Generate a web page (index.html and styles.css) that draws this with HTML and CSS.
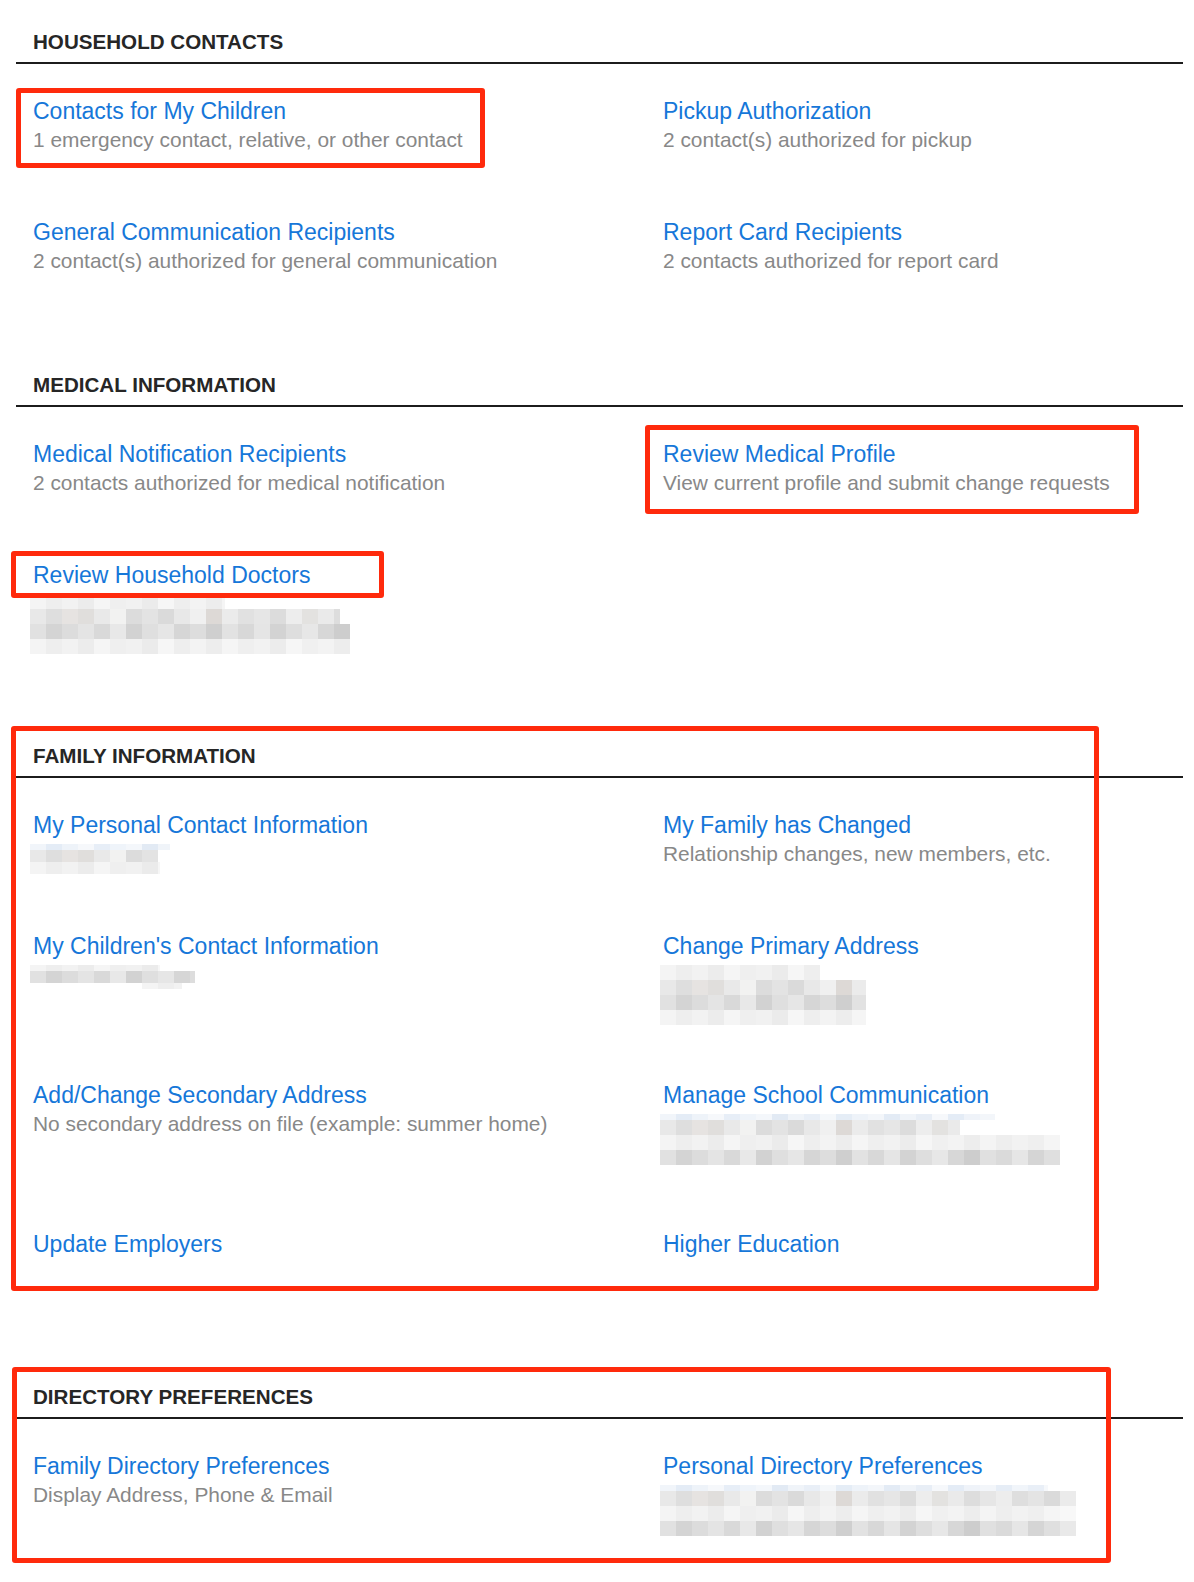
FILE: index.html
```html
<!DOCTYPE html>
<html lang="en">
<head>
  <meta charset="UTF-8">
  <meta name="viewport" content="width=device-width, initial-scale=1.0">
  <title>Family Profile</title>
  <link rel="stylesheet" href="styles.css">
</head>
<body>
  <div class="sheet">
    <section class="group">
      <h2 class="group-title">HOUSEHOLD CONTACTS</h2>
      <div class="links">
        <div class="item">
          <a href="#">Contacts for My Children</a>
          <p class="note">1 emergency contact, relative, or other contact</p>
        </div>
        <div class="item">
          <a href="#">Pickup Authorization</a>
          <p class="note">2 contact(s) authorized for pickup</p>
        </div>
        <div class="item">
          <a href="#">General Communication Recipients</a>
          <p class="note">2 contact(s) authorized for general communication</p>
        </div>
        <div class="item">
          <a href="#">Report Card Recipients</a>
          <p class="note">2 contacts authorized for report card</p>
        </div>
      </div>
    </section>

    <section class="group">
      <h2 class="group-title">MEDICAL INFORMATION</h2>
      <div class="links">
        <div class="item">
          <a href="#">Medical Notification Recipients</a>
          <p class="note">2 contacts authorized for medical notification</p>
        </div>
        <div class="item">
          <a href="#">Review Medical Profile</a>
          <p class="note">View current profile and submit change requests</p>
        </div>
        <div class="item">
          <a href="#">Review Household Doctors</a>
          <!-- doctor names hidden -->
          <div class="mosaic two doctors">
            <span class="px light w195"></span>
            <span class="px mid w310"></span>
            <span class="px dark w320"></span>
            <span class="px light w320"></span>
          </div>
        </div>
      </div>
    </section>

    <section class="group">
      <h2 class="group-title">FAMILY INFORMATION</h2>
      <div class="links">
        <div class="item">
          <a href="#">My Personal Contact Information</a>
          <div class="mosaic personal">
            <span class="px blue w140"></span>
            <span class="px mid w128 tall"></span>
            <span class="px light w130 tall"></span>
          </div>
        </div>
        <div class="item">
          <a href="#">My Family has Changed</a>
          <p class="note">Relationship changes, new members, etc.</p>
        </div>
        <div class="item">
          <a href="#">My Children's Contact Information</a>
          <div class="mosaic children">
            <span class="px light w130 thin"></span>
            <span class="px dark w165 tall"></span>
            <span class="px light w40 thin shift"></span>
          </div>
        </div>
        <div class="item">
          <a href="#">Change Primary Address</a>
          <div class="mosaic two address">
            <span class="px light w160"></span>
            <span class="px mid w206"></span>
            <span class="px dark w206"></span>
            <span class="px light w206"></span>
          </div>
        </div>
        <div class="item">
          <a href="#">Add/Change Secondary Address</a>
          <p class="note">No secondary address on file (example: summer home)</p>
        </div>
        <div class="item">
          <a href="#">Manage School Communication</a>
          <div class="mosaic two school">
            <span class="px blue w335 thin"></span>
            <span class="px mid w300"></span>
            <span class="px light w400"></span>
            <span class="px dark w400"></span>
          </div>
        </div>
        <div class="item">
          <a href="#">Update Employers</a>
          <p class="note"></p>
        </div>
        <div class="item">
          <a href="#">Higher Education</a>
          <p class="note"></p>
        </div>
      </div>
    </section>

    <section class="group">
      <h2 class="group-title">DIRECTORY PREFERENCES</h2>
      <div class="links">
        <div class="item">
          <a href="#">Family Directory Preferences</a>
          <p class="note">Display Address, Phone &amp; Email</p>
        </div>
        <div class="item">
          <a href="#">Personal Directory Preferences</a>
          <div class="mosaic two directory">
            <span class="px blue w388 thin"></span>
            <span class="px mid w416"></span>
            <span class="px light w416"></span>
            <span class="px dark w416"></span>
          </div>
        </div>
      </div>
    </section>

    <!-- review marks drawn over the page -->
    <div class="mark mark-children"></div>
    <div class="mark mark-medical"></div>
    <div class="mark mark-doctors"></div>
    <div class="mark mark-family"></div>
    <div class="mark mark-directory"></div>
  </div>
</body>
</html>
```

FILE: styles.css
```css
*{
  box-sizing: border-box;
}
body{
  margin: 0;
  background: #fff;
  font-family: "Liberation Sans", Arial, Helvetica, sans-serif;
}
a{
  text-decoration: none;
}
.sheet{
  position: relative;
  padding-top: 30px;
  padding-bottom: 20px;
}
.group{
  margin: 0 11px 0 16px;
}
.group + .group{
  margin-top: 34px;
}
.group-title{
  margin: 0;
  padding: 0 17px 8px;
  font-size: 20.6px;
  line-height: 24px;
  font-weight: bold;
  color: #262626;
  border-bottom: 2px solid #1c1c1c;
}
.links{
  display: grid;
  grid-template-columns: 630px 1fr;
  row-gap: 64px;
  padding: 33px 17px 64px;
}
.item > a{
  display: block;
  font-size: 23px;
  line-height: 29px;
  color: #1677d9;
}
.note{
  margin: 0;
  min-height: 28px;
  font-size: 20.9px;
  line-height: 28px;
  color: #888;
}

/* pixelated (hidden) details */
.mosaic{
  height: 28px;
  margin-left: -3px;
  padding-top: 4px;
  display: flex;
  flex-direction: column;
}
.mosaic.two{
  height: 56px;
}
.px{
  display: block;
  height: 15px;
  flex-shrink: 0;
}
.px.thin{
  height: 6px;
}
.px.tall{
  height: 12px;
}
.px.shift{
  margin-left: 112px;
}
.px.blue{
  height: 6px;
  background: linear-gradient(90deg, #f1f5fa 0 16px, #e4ecf6 16px 32px, #eef3f9 32px 48px, #f6f8fb 48px 64px, #e7eef7 64px 80px, #eff4fa 80px 96px, #f4f7fb 96px 112px, #e2eaf4 112px 128px, #f0f4f9 128px 144px, #e9eff7 144px 160px, #f5f8fb 160px 176px, #e5edf6 176px 192px, #eef3f9 192px 208px, #f3f6fa 208px 224px, #e3ebf5 224px 240px, #f0f4f9 240px 256px, #e8eef6 256px 272px, #f6f8fb 272px 288px, #e4ecf6 288px 304px, #eff3f9 304px 320px, #f3f6fa 320px 336px, #e6edf6 336px 352px, #f1f5fa 352px 368px, #e9eff7 368px 384px, #f6f8fb 384px 400px);
}
.px.mid{
  background: linear-gradient(90deg, #e8e8e8 0 16px, #dedede 16px 32px, #e6e3e1 32px 48px, #e0dedc 48px 64px, #e9e9e9 64px 80px, #f2f2f1 80px 96px, #dcdcdc 96px 112px, #e3e3e3 112px 128px, #dadada 128px 144px, #e8e8e8 144px 160px, #f0f0f0 160px 176px, #ddd9d6 176px 192px, #ebebeb 192px 208px, #e1e1e1 208px 224px, #e6e6e6 224px 240px, #dcdcdc 240px 256px, #ededed 256px 272px, #e3e2e0 272px 288px, #eaeaea 288px 304px, #dddddd 304px 320px, #e6e6e6 320px 336px, #ededed 336px 352px, #dedede 352px 368px, #e4e4e4 368px 384px, #dadada 384px 400px, #ebebeb 400px 416px);
}
.px.dark{
  background: linear-gradient(90deg, #e1e1e1 0 16px, #d4d4d4 16px 32px, #dcdcdc 32px 48px, #e4e4e4 48px 64px, #d9d9d9 64px 80px, #e8e8e8 80px 96px, #d2d2d2 96px 112px, #dfdfdf 112px 128px, #e6e6e6 128px 144px, #d6d6d6 144px 160px, #dddddd 160px 176px, #cfcfcf 176px 192px, #e2e2e2 192px 208px, #d8d8d8 208px 224px, #e5e5e5 224px 240px, #d3d3d3 240px 256px, #dedede 256px 272px, #e7e7e7 272px 288px, #d7d7d7 288px 304px, #cdcdcd 304px 320px, #e0e0e0 320px 336px, #dadada 336px 352px, #e6e6e6 352px 368px, #d5d5d5 368px 384px, #dfdfdf 384px 400px, #e9e9e9 400px 416px);
}
.px.light{
  background: linear-gradient(90deg, #f4f4f4 0 16px, #eeeeee 16px 32px, #f2f2f2 32px 48px, #ececec 48px 64px, #f5f5f5 64px 80px, #efefef 80px 96px, #f1f1f1 96px 112px, #ebebeb 112px 128px, #f6f6f6 128px 144px, #eeeeee 144px 160px, #f3f3f3 160px 176px, #ededed 176px 192px, #f5f5f5 192px 208px, #efefef 208px 224px, #f2f2f2 224px 240px, #ececec 240px 256px, #f6f6f6 256px 272px, #f0f0f0 272px 288px, #f3f3f3 288px 304px, #ededed 304px 320px, #f4f4f4 320px 336px, #eeeeee 336px 352px, #f2f2f2 352px 368px, #efefef 368px 384px, #f5f5f5 384px 400px, #f8f8f8 400px 416px);
}
.w40{ width: 40px; }
.w128{ width: 128px; }
.w130{ width: 130px; }
.w140{ width: 140px; }
.w160{ width: 160px; }
.w165{ width: 165px; }
.w195{ width: 195px; }
.w206{ width: 206px; }
.w300{ width: 300px; }
.w310{ width: 310px; }
.w320{ width: 320px; }
.w335{ width: 335px; }
.w388{ width: 388px; }
.w400{ width: 400px; }
.w416{ width: 416px; }

/* red review marks */
.mark{
  position: absolute;
  border: 5px solid #ff2a0c;
  border-radius: 3px;
  pointer-events: none;
}
.mark-children{
  left: 16px;
  top: 88px;
  width: 469px;
  height: 80px;
}
.mark-medical{
  left: 645px;
  top: 425px;
  width: 494px;
  height: 89px;
}
.mark-doctors{
  left: 11px;
  top: 551px;
  width: 373px;
  height: 47px;
}
.mark-family{
  left: 11px;
  top: 726px;
  width: 1088px;
  height: 565px;
}
.mark-directory{
  left: 12px;
  top: 1367px;
  width: 1099px;
  height: 196px;
}
```
